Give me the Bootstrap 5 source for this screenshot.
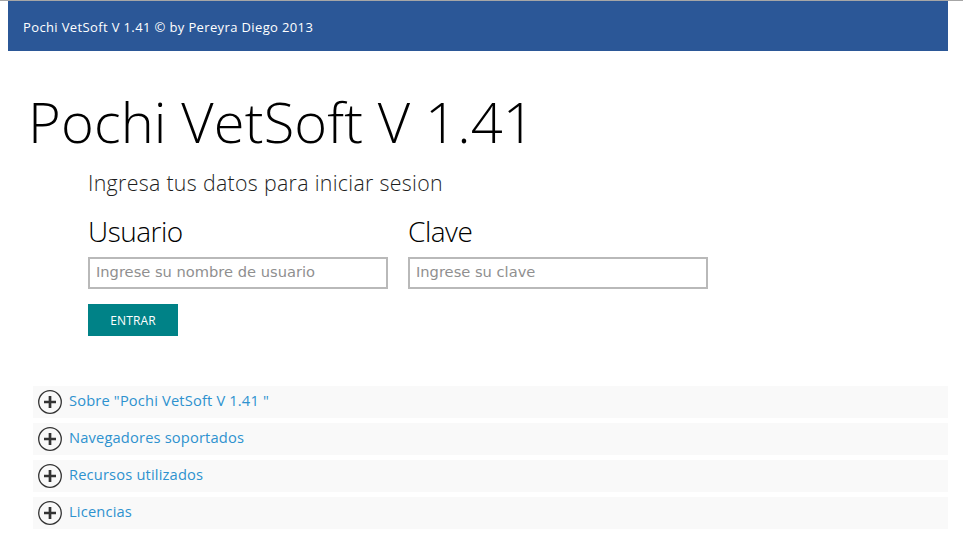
<!DOCTYPE html>
<html lang="es">
<head>
<meta charset="utf-8">
<meta name="viewport" content="width=device-width, initial-scale=1">
<title>Pochi VetSoft V 1.41</title>
<link href="https://cdn.jsdelivr.net/npm/bootstrap@5.3.0/dist/css/bootstrap.min.css" rel="stylesheet">
<style>
body{font-family:"Open Sans",sans-serif;color:#000;background:#fff;border-top:1px solid #a6a6a6;height:537px;overflow:hidden}
.page{padding:0 15px 0 8px}
.topbar{background:#2b5797;height:50px;padding:2px 15px 0;font-size:13px;letter-spacing:.37px}
.topbar .navbar-text{color:#fff;padding:0;line-height:20px}
.title{font-size:56px;font-weight:300;line-height:56px;margin:42px 0 0 20px;letter-spacing:.15px}
.login{margin:21px 0 0 80px}
.intro{font-size:21.33px;font-weight:300;line-height:26px;color:#1d1d1d;letter-spacing:.32px}
.fields{gap:20px;margin-top:17px}
.field{width:300px}
.field label{display:block;font-size:28px;font-weight:300;line-height:36px;margin-bottom:8px;letter-spacing:-.5px}
.field .form-control{height:32px;border:2px solid #b9b9b9;padding:0 6px 3px;font:14.67px "DejaVu Sans",sans-serif}
.field .form-control::placeholder{color:#8f8f8f;opacity:1}
.enter{background:#008287;color:#fff;width:90px;height:32px;margin-top:15px;padding:1px 0 0;font-size:12px;line-height:20px;letter-spacing:.12px}
.enter:hover{background:#006e72;color:#fff}
.topics{margin:50px 0 0 25px;gap:5px}
.topics .list-group-item{height:32px;background:#f9f9f9;color:#2e92cf;font-size:14.67px;line-height:20px;padding:0 5px;letter-spacing:.17px}
.topics svg{width:24px;height:24px;margin-right:7px}
.topics span{margin-top:-5px}
</style>
</head>
<body>
<div class="page">
  <nav class="topbar navbar"><span class="navbar-text">Pochi VetSoft V 1.41 © by Pereyra Diego 2013</span></nav>
  <main>
    <h1 class="title">Pochi VetSoft V 1.41</h1>
    <form class="login">
      <p class="intro mb-0">Ingresa tus datos para iniciar sesion</p>
      <div class="fields d-flex">
        <div class="field"><label for="user">Usuario</label><input id="user" type="text" class="form-control rounded-0" placeholder="Ingrese su nombre de usuario"></div>
        <div class="field"><label for="pass">Clave</label><input id="pass" type="password" class="form-control rounded-0" placeholder="Ingrese su clave"></div>
      </div>
      <button type="button" class="btn enter border-0 rounded-0 d-block">ENTRAR</button>
    </form>
    <svg class="d-none"><symbol id="plus" viewBox="0 0 24 24"><circle cx="12" cy="12" r="11.3" fill="none" stroke="#333" stroke-width="1.3"/><path d="M12 6v12M6 12h12" stroke="#333" stroke-width="2.7"/></symbol></svg>
    <div class="topics list-group list-group-flush">
      <a href="#" class="list-group-item border-0 d-flex align-items-center"><svg><use href="#plus"/></svg><span>Sobre "Pochi VetSoft V 1.41 "</span></a>
      <a href="#" class="list-group-item border-0 d-flex align-items-center"><svg><use href="#plus"/></svg><span>Navegadores soportados</span></a>
      <a href="#" class="list-group-item border-0 d-flex align-items-center"><svg><use href="#plus"/></svg><span>Recursos utilizados</span></a>
      <a href="#" class="list-group-item border-0 d-flex align-items-center"><svg><use href="#plus"/></svg><span>Licencias</span></a>
    </div>
  </main>
</div>
<script src="https://cdn.jsdelivr.net/npm/bootstrap@5.3.0/dist/js/bootstrap.bundle.min.js"></script>
</body>
</html>
